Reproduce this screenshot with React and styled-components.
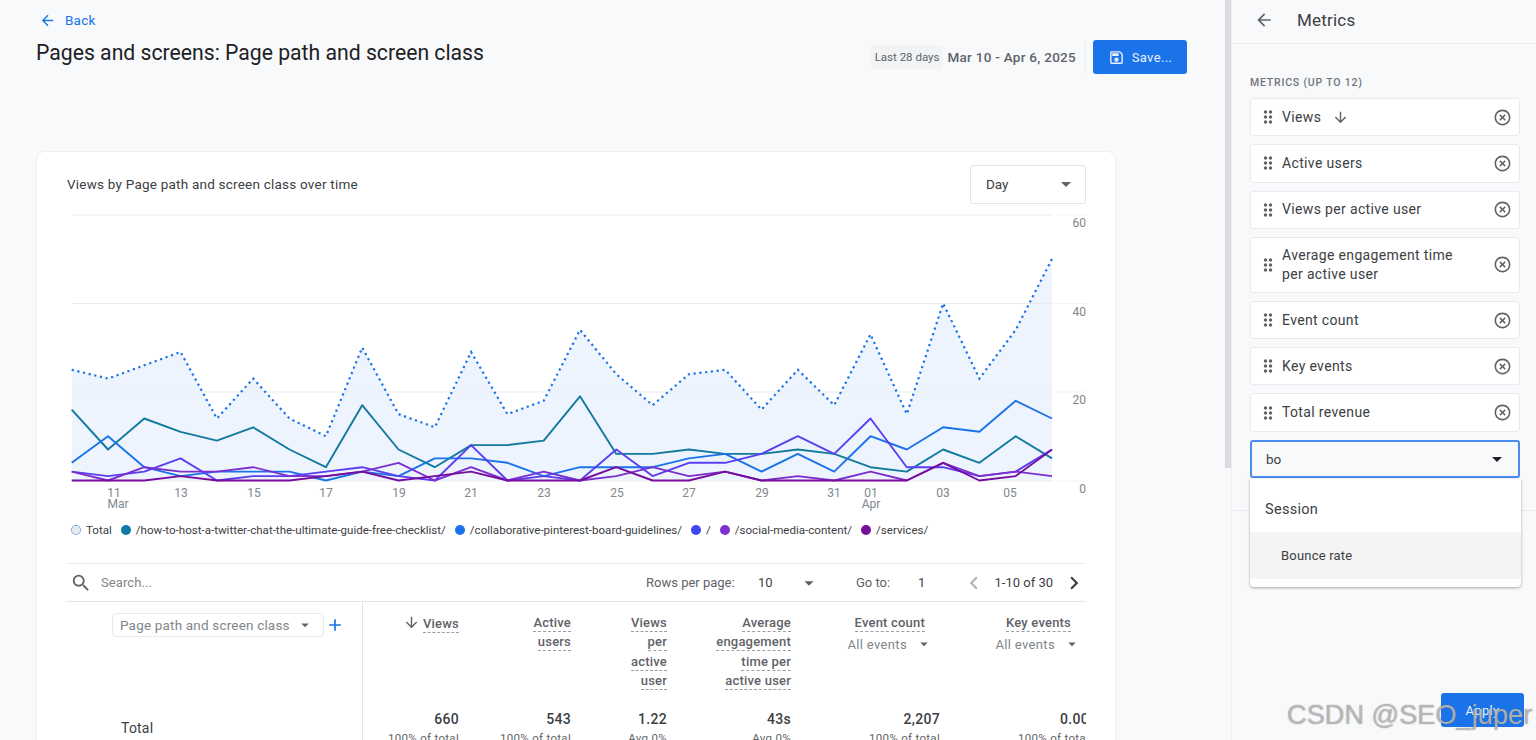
import React from 'react';
import styled, { createGlobalStyle } from 'styled-components';
import { MdArrowBack, MdArrowDownward, MdOutlineSave, MdSearch, MdHighlightOff, MdDragIndicator, MdAdd, MdArrowDropDown, MdChevronLeft, MdChevronRight } from 'react-icons/md';

const Global = createGlobalStyle`
  html, body { margin: 0; padding: 0; height: 740px; overflow: hidden; background: #f8f9fb; }
  body { font-family: Roboto, "Open Sans", Arial, sans-serif; color: #3c4043; }
  * { box-sizing: border-box; }
`;

const Shell = styled.div`
  position: relative;
  display: grid;
  grid-template-columns: 1225px 7px 304px;
  width: 1536px;
  height: 740px;
  overflow: hidden;
`;
const Main = styled.main`
  padding: 12px 38px 0 36px;
  min-width: 0;
  overflow: hidden;
`;
const BackLink = styled.div`
  display: flex;
  align-items: center;
  gap: 9px;
  height: 16px;
  padding-left: 3px;
  color: #1a73e8;
  font-size: 13.5px;
  letter-spacing: .2px;
  svg { font-size: 17px; }
`;
const TitleRow = styled.div`
  display: flex;
  justify-content: space-between;
  margin-top: 12px;
  height: 34px;
`;
const Title = styled.h1`
  margin: 0;
  font-size: 21.2px;
  line-height: 26px;
  font-weight: 400;
  color: #202124;
`;
const Actions = styled.div`
  display: flex;
  align-items: center;
  height: 34px;
`;
const RangeChip = styled.span`
  display: flex;
  align-items: center;
  height: 24px;
  padding: 0 4px;
  background: #f1f3f4;
  border-radius: 2px;
  font-size: 11.5px;
  color: #5f6368;
`;
const DateText = styled.span`
  margin-left: 4px;
  font-size: 13.5px;
  font-weight: 500;
  color: #5f6368;
  letter-spacing: .27px;
`;
const Divider = styled.span`
  width: 1px;
  height: 35px;
  margin: 0 7px 0 9px;
  background: #eceef0;
`;
const PrimaryButton = styled.button`
  display: flex;
  align-items: center;
  justify-content: center;
  gap: 7px;
  width: ${p => p.$w}px;
  height: 34px;
  border: 0;
  padding: 0;
  border-radius: 3px;
  background: #1a73e8;
  color: #e8f0fe;
  font: 400 13px Roboto, sans-serif;
  letter-spacing: .35px;
  svg { font-size: 17px; }
`;
const Card = styled.section`
  width: 1080px;
  margin-top: 77px;
  height: 600px;
  padding: 13px 30px 0;
  background: #fff;
  border: 1px solid #eceef0;
  border-radius: 8px;
`;
const CardHead = styled.div`
  display: flex;
  align-items: center;
  justify-content: space-between;
  height: 39px;
  margin-right: -1px;
`;
const CardTitle = styled.h2`
  margin: 0 0 2px;
  font-size: 13.5px;
  font-weight: 400;
  color: #3c4043;
  letter-spacing: .22px;
`;
const DaySelect = styled.div`
  display: flex;
  align-items: center;
  justify-content: space-between;
  width: 116px;
  height: 39px;
  padding: 0 7px 2px 15px;
  border: 1px solid #e3e5e8;
  border-radius: 3px;
  font-size: 13.5px;
  color: #3c4043;
  svg { font-size: 24px; color: #5f6368; }
`;
const ChartSvg = styled.svg`
  display: block;
  width: 1019px;
  height: 300px;
  margin: 10px 0 0 0;
  text { font-family: Roboto, sans-serif; font-size: 12px; fill: #80868b; }
`;
const Legend = styled.div`
  display: flex;
  align-items: center;
  height: 16px;
  margin: 8px 0 0 4px;
  font-size: 11.55px;
  color: #3c4043;
`;
const LegendItem = styled.span`
  display: flex;
  align-items: center;
  gap: 5px;
  margin-right: 9px;
  white-space: nowrap;
`;
const Dot = styled.i`
  display: block;
  width: 10px;
  height: 10px;
  border-radius: 50%;
  background: ${p => p.$c};
`;
const DashedDot = styled(Dot)`
  background: #e8eaed;
  border: 1.5px dotted #1a73e8;
`;
const Toolbar = styled.div`
  display: flex;
  align-items: center;
  height: 39px;
  margin-top: 25px;
  border-top: 1px solid #eceef0;
  border-bottom: 1px solid #e3e5e8;
  font-size: 13px;
  color: #5f6368;
  white-space: nowrap;
`;
const SearchBox = styled.div`
  display: flex;
  align-items: center;
  gap: 9px;
  padding-left: 3px;
  flex: 1;
  color: #80868b;
  letter-spacing: .1px;
  svg { font-size: 22px; color: #5f6368; }
`;
const ToolbarPart = styled.span`
  display: flex;
  align-items: center;
  flex: none;
  width: ${p => p.$w}px;
  justify-content: ${p => p.$j || 'flex-start'};
  color: ${p => p.$c || 'inherit'};
  svg { flex: none; }
`;
const Table = styled.div`
  display: grid;
  grid-template-columns: 296px 96px 112px 96px 124px 149px 149px;
  grid-template-rows: 104px 60px;
  width: 1019px;
  overflow: hidden;
`;
const DimCell = styled.div`
  border-right: 1px solid #e3e5e8;
  padding: ${p => p.$pad};
`;
const DimRow = styled.div`
  display: flex;
  align-items: center;
  gap: 1px;
  svg.plus { font-size: 20px; color: #1a73e8; }
`;
const DimSelect = styled.div`
  display: flex;
  align-items: center;
  justify-content: space-between;
  width: 212px;
  height: 24px;
  padding: 0 9px 0 7px;
  border: 1px solid #e8eaed;
  border-radius: 4px;
  font-size: 13.5px;
  color: #80868b;
  letter-spacing: .18px;
  svg { font-size: 18px; color: #5f6368; }
`;
const TotalLabel = styled.div`
  font-size: 14px;
  line-height: 18px;
  color: #3c4043;
  letter-spacing: .2px;
`;
const MetricHead = styled.div`
  padding: 12px ${p => p.$pr || 0}px 0 0;
  text-align: right;
  font-size: 13px;
  font-weight: 500;
  color: #5f6368;
  letter-spacing: .2px;
`;
const HeadLine = styled.div`
  height: 19.3px;
  line-height: 17px;
  white-space: nowrap;
  svg { font-size: 17px; vertical-align: -3px; margin-right: 3px; }
`;
const Dashed = styled.span`
  display: inline-block;
  line-height: 16px;
  border-bottom: 1px dashed #9aa0a6;
`;
const SubSelect = styled.div`
  display: flex;
  align-items: center;
  justify-content: flex-end;
  gap: 8px;
  margin: 2px ${p => -p.$over}px 0 0;
  font-weight: 400;
  font-size: 13px;
  color: #80868b;
  letter-spacing: .35px;
  white-space: nowrap;
  svg { font-size: 18px; color: #5f6368; margin: 0; }
`;
const MetricCell = styled.div`
  padding-top: 4px;
  text-align: right;
  white-space: nowrap;
`;
const Value = styled.div`
  font-size: 14px;
  line-height: 18px;
  font-weight: 500;
  color: #3c4043;
  letter-spacing: .3px;
`;
const SubValue = styled.div`
  margin-top: 3px;
  font-size: 11.5px;
  line-height: 14px;
  color: #5f6368;
  letter-spacing: .3px;
`;
const Gutter = styled.div`
  background: linear-gradient(#dadce0, #dadce0) left top / 6px 468px no-repeat;
  border-right: 1px solid #eceef0;
`;
const Panel = styled.aside`
  position: relative;
  display: flex;
  flex-direction: column;
  height: 740px;
`;
const PanelHead = styled.header`
  display: flex;
  align-items: center;
  gap: 23px;
  height: 44px;
  padding: 0 0 4px 22px;
  border-bottom: 1px solid #eceef0;
  font-size: 17px;
  color: #3c4043;
  letter-spacing: .2px;
  svg { font-size: 20px; color: #5f6368; }
`;
const PanelBody = styled.div`
  position: relative;
  height: 467px;
  padding: 32px 16px 0 18px;
  border-bottom: 1px solid #e8eaed;
`;
const GroupLabel = styled.div`
  height: 22px;
  font-size: 10.5px;
  line-height: 14px;
  font-weight: 500;
  letter-spacing: .8px;
  color: #70757a;
`;
const MetricList = styled.div`
  display: flex;
  flex-direction: column;
  gap: 8px;
`;
const MetricItem = styled.div`
  display: flex;
  align-items: center;
  min-height: ${p => (p.$tall ? 56 : 38.3)}px;
  padding: 0 7px 0 10px;
  background: #fff;
  border: 1px solid #e8eaed;
  border-radius: 3px;
  font-size: 14px;
  line-height: 19px;
  letter-spacing: .35px;
  color: #3c4043;
`;
const Grip = styled(MdDragIndicator)`
  flex: none;
  font-size: 20px;
  margin-left: -3px;
  margin-right: 4px;
  color: #5f6368;
`;
const ItemText = styled.span`
  flex: 1;
  display: flex;
  align-items: center;
  gap: 11px;
  svg { font-size: 17px; color: #5f6368; }
`;
const Remove = styled(MdHighlightOff)`
  flex: none;
  font-size: 19px;
  color: #5f6368;
`;
const ComboInput = styled.div`
  display: flex;
  align-items: center;
  justify-content: space-between;
  height: 38.3px;
  padding: 0 9px 0 14px;
  background: #f8f9fb;
  border: 2px solid #4a8cf0;
  border-radius: 3px;
  font-size: 13.5px;
  color: #3c4043;
  svg { font-size: 24px; color: #202124; }
`;
const Menu = styled.div`
  position: absolute;
  left: 18px;
  top: 435px;
  width: 271px;
  height: 108px;
  padding-bottom: 8px;
  background: #fff;
  border-radius: 0 0 4px 4px;
  box-shadow: 0 1px 3px rgba(60,64,67,.45);
  z-index: 2;
`;
const MenuGroup = styled.div`
  display: flex;
  align-items: center;
  height: 53px;
  padding: 8px 0 0 15px;
  font-size: 14.5px;
  letter-spacing: .3px;
  color: #3c4043;
`;
const MenuOption = styled.div`
  display: flex;
  align-items: center;
  height: 47px;
  padding-left: 31px;
  background: #f4f4f4;
  font-size: 13px;
  letter-spacing: .2px;
  color: #3c4043;
`;
const PanelFoot = styled.div`
  flex: 1;
  display: flex;
  justify-content: flex-end;
  align-items: flex-end;
  padding: 0 12px 13px 0;
`;
const Watermark = styled.div`
  position: absolute;
  left: 1287px;
  top: 699px;
  font-family: "Liberation Sans", Arial, sans-serif;
  font-size: 27.2px;
  line-height: 32px;
  white-space: nowrap;
  color: rgba(255,255,255,.5);
  text-shadow: 0 0 1px rgba(90,90,90,.95);
  z-index: 3;
`;

const X0 = 71.7, BASE = 480.5, UNIT = 4.43;
const xAt = i => X0 + i * (980.3 / 27);
const yAt = v => BASE - v * UNIT;
const pts = arr => arr.map((v, i) => `${xAt(i).toFixed(1)},${yAt(v).toFixed(1)}`).join(' ');

const TOTAL = [25, 23, 26, 29, 14, 23, 14, 10, 30, 15, 12, 29, 15, 18, 34, 24, 17, 24, 25, 16, 25, 17, 33, 15, 40, 23, 34, 50];
const SERIES = [
  { c: '#12799f', d: [16, 7, 14, 11, 9, 12, 7, 3, 17, 7, 3, 8, 8, 9, 19, 6, 6, 7, 6, 6, 7, 6, 3, 2, 7, 4, 10, 5] },
  { c: '#1a73e8', d: [4, 10, 3, 1, 2, 2, 2, 0, 2, 1, 5, 5, 4, 1, 3, 3, 3, 5, 6, 2, 6, 2, 10, 7, 12, 11, 18, 14] },
  { c: '#5b3ef0', d: [2, 1, 2, 5, 0, 1, 1, 2, 3, 1, 0, 8, 0, 1, 0, 7, 1, 4, 4, 6, 10, 6, 14, 3, 3, 1, 2, 7] },
  { c: '#7b30cf', d: [2, 0, 3, 2, 2, 3, 1, 1, 2, 4, 0, 3, 0, 2, 0, 1, 3, 1, 2, 0, 1, 0, 2, 0, 4, 1, 2, 1] },
  { c: '#760d9c', d: [0, 0, 0, 1, 0, 0, 0, 1, 2, 0, 1, 2, 0, 0, 0, 3, 0, 0, 2, 0, 0, 0, 0, 0, 4, 0, 1, 7] },
];
const XLABELS = [['11', 114], ['13', 181], ['15', 254], ['17', 326], ['19', 399], ['21', 471], ['23', 544], ['25', 617], ['27', 689], ['29', 762], ['31', 834], ['01', 871], ['03', 943], ['05', 1010]];
const YLABELS = [[60, 215, 227], [40, 303.5, 316], [20, 392, 404], [0, 481, 493]];

function Chart() {
  const area = `${xAt(0)},${BASE} ${pts(TOTAL)} ${xAt(27)},${BASE}`;
  return (
    <ChartSvg viewBox="67 214 1019 300">
      <polygon points={area} fill="#eef4fe" />
      {YLABELS.map(([v, y, ty]) => (
        <g key={v}>
          <line x1="72" x2="1053" y1={y} y2={y} stroke="#e9ebee" />
          <line x1="1056" x2="1086" y1={y} y2={y} stroke="#f1f3f4" />
          <text x="1086" y={ty} textAnchor="end">{v}</text>
        </g>
      ))}
      <polyline points={pts(TOTAL)} fill="none" stroke="#1a73e8" strokeWidth="2.2" strokeDasharray="2.2 3.6" />
      {SERIES.map(s => (
        <polyline key={s.c} points={pts(s.d)} fill="none" stroke={s.c} strokeWidth="1.9" strokeLinejoin="round" />
      ))}
      {XLABELS.map(([l, x]) => <text key={l} x={x} y="497" textAnchor="middle">{l}</text>)}
      <text x="118" y="508" textAnchor="middle">Mar</text>
      <text x="871" y="508" textAnchor="middle">Apr</text>
    </ChartSvg>
  );
}

const METRICS = [
  { t: 'Views', arrow: true },
  { t: 'Active users' },
  { t: 'Views per active user' },
  { t: <>Average engagement time<br />per active user</>, tall: true },
  { t: 'Event count' },
  { t: 'Key events' },
  { t: 'Total revenue' },
];
const LEGEND = [
  ['#0f7aa8', '/how-to-host-a-twitter-chat-the-ultimate-guide-free-checklist/'],
  ['#1a73e8', '/collaborative-pinterest-board-guidelines/'],
  ['#3f47f0', '/'],
  ['#7b30cf', '/social-media-content/'],
  ['#760d9c', '/services/'],
];
const HEADS = [
  { lines: ['Views'], arrow: true },
  { lines: ['Active', 'users'] },
  { lines: ['Views', 'per', 'active', 'user'] },
  { lines: ['Average', 'engagement', 'time per', 'active user'] },
  { lines: ['Event count'], over: 8, pr: 15 },
  { lines: ['Key events'], over: 10, pr: 18 },
];
const VALUES = [
  ['660', '100% of total'],
  ['543', '100% of total'],
  ['1.22', 'Avg 0%'],
  ['43s', 'Avg 0%'],
  ['2,207', '100% of total'],
  ['0.00', '100% of total'],
];

export default function App() {
  return (
    <Shell>
      <Global />
      <Main>
        <BackLink><MdArrowBack />Back</BackLink>
        <TitleRow>
          <Title>Pages and screens: Page path and screen class</Title>
          <Actions>
            <RangeChip>Last 28 days</RangeChip>
            <DateText>Mar 10 - Apr 6, 2025</DateText>
            <Divider />
            <PrimaryButton $w={94}><MdOutlineSave />Save...</PrimaryButton>
          </Actions>
        </TitleRow>
        <Card>
          <CardHead>
            <CardTitle>Views by Page path and screen class over time</CardTitle>
            <DaySelect>Day<MdArrowDropDown /></DaySelect>
          </CardHead>
          <Chart />
          <Legend>
            <LegendItem><DashedDot />Total</LegendItem>
            {LEGEND.map(([c, t]) => <LegendItem key={t}><Dot $c={c} />{t}</LegendItem>)}
          </Legend>
          <Toolbar>
            <SearchBox><MdSearch />Search...</SearchBox>
            <ToolbarPart $w={112}>Rows per page:</ToolbarPart>
            <ToolbarPart $w={98} $j="space-between" $c="#3c4043">10<MdArrowDropDown size={22} color="#5f6368" style={{ marginRight: 36 }} /></ToolbarPart>
            <ToolbarPart $w={62}>Go to:</ToolbarPart>
            <ToolbarPart $w={45} $c="#3c4043">1</ToolbarPart>
            <ToolbarPart $w={122} $j="flex-end" $c="#3c4043"><MdChevronLeft size={26} color="#b0b4b8" style={{ marginRight: 7 }} />1-10 of 30<MdChevronRight size={26} color="#3c4043" style={{ marginLeft: 8, marginRight: -2 }} /></ToolbarPart>
          </Toolbar>
          <Table>
            <DimCell $pad="11px 0 0 45px">
              <DimRow>
                <DimSelect>Page path and screen class<MdArrowDropDown /></DimSelect>
                <MdAdd className="plus" />
              </DimRow>
            </DimCell>
            {HEADS.map(h => (
              <MetricHead key={h.lines[0]} $pr={h.pr}>
                {h.lines.map(l => (
                  <HeadLine key={l}>
                    {h.arrow && <MdArrowDownward />}
                    <Dashed>{l}</Dashed>
                  </HeadLine>
                ))}
                {h.over && <SubSelect $over={h.over}>All events<MdArrowDropDown /></SubSelect>}
              </MetricHead>
            ))}
            <DimCell $pad="13px 0 0 54px"><TotalLabel>Total</TotalLabel></DimCell>
            {VALUES.map(([v, s], i) => (
              <MetricCell key={i}>
                <Value>{v}</Value>
                <SubValue>{s}</SubValue>
              </MetricCell>
            ))}
          </Table>
        </Card>
      </Main>
      <Gutter />
      <Panel>
        <PanelHead><MdArrowBack />Metrics</PanelHead>
        <PanelBody>
          <GroupLabel>METRICS (UP TO 12)</GroupLabel>
          <MetricList>
            {METRICS.map((m, i) => (
              <MetricItem key={i} $tall={m.tall}>
                <Grip />
                <ItemText><span>{m.t}</span>{m.arrow && <MdArrowDownward />}</ItemText>
                <Remove />
              </MetricItem>
            ))}
            <ComboInput>bo<MdArrowDropDown /></ComboInput>
          </MetricList>
          <Menu>
            <MenuGroup>Session</MenuGroup>
            <MenuOption>Bounce rate</MenuOption>
          </Menu>
        </PanelBody>
        <PanelFoot><PrimaryButton $w={83}>Apply</PrimaryButton></PanelFoot>
      </Panel>
      <Watermark>CSDN @SEO_juper</Watermark>
    </Shell>
  );
}
